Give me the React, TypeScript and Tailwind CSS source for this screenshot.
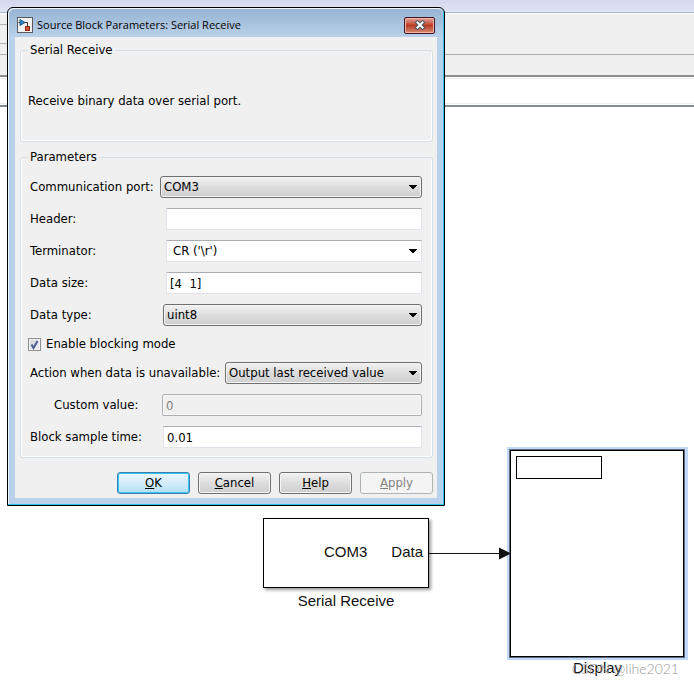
import React, { useState } from "react";

const uiFont = "font-['Tahoma','DejaVu_Sans_Condensed','DejaVu_Sans',sans-serif]";

const Arrow = () => (
  <svg className="pointer-events-none absolute right-[5px] top-[9px]" width="8" height="5" viewBox="0 0 8 5" shapeRendering="crispEdges">
    <path d="M0 0h8v1H0zM1 1h6v1H1zM2 2h4v1H2zM3 3h2v1H3z" fill="#000" />
  </svg>
);

type FieldProps = { id: string; label: string; labelClass: string; children: React.ReactNode };

const Field = ({ id, label, labelClass, children }: FieldProps) => (
  <div className="flex h-[22px] items-center">
    <label htmlFor={id} className={`shrink-0 whitespace-nowrap ${labelClass}`}>{label}</label>
    <div className="relative h-full min-w-0 flex-1">{children}</div>
  </div>
);

const comboClass =
  "block h-full w-full appearance-none rounded-[3px] border border-[#707070] bg-linear-to-b from-[#f2f2f2] from-0% via-[#dddddd] via-50% to-[#cfcfcf] pl-[3px] pr-5 shadow-[inset_0_0_0_1px_#f4f4f4] outline-none";
const inputClass =
  "block h-full w-full rounded-[1px] border border-[#e2e3ea] border-t-[#abadb3] bg-white pl-[3px] outline-none";

const Combo = ({ id, options }: { id: string; options: string[] }) => (
  <>
    <select id={id} className={comboClass}>
      {options.map((o) => <option key={o}>{o}</option>)}
    </select>
    <Arrow />
  </>
);

const BlockIcon = () => (
  <svg width="16" height="16" viewBox="0 0 16 16">
    <rect x="0.5" y="0.5" width="15" height="15" fill="#f1f1f1" stroke="#5b5b5b" />
    <path d="M8 5.5h2.5V9M1.5 5.5H3" fill="none" stroke="#333" />
    <path d="M3 2.5v6l5-3z" fill="#3387bd" stroke="#1c5d8a" />
    <rect x="8.5" y="9.5" width="4" height="4" fill="#d8532b" stroke="#8d2c10" />
  </svg>
);

const buttonClass =
  "h-[22px] w-[73px] rounded-[3px] border border-[#707070] bg-linear-to-b from-[#f2f2f2] from-0% via-[#dddddd] via-50% to-[#cfcfcf] text-center leading-5 shadow-[inset_0_0_0_1px_#f6f6f6]";

const ParametersDialog = () => {
  const [blocking, setBlocking] = useState(true);

  return (
    <div
      role="dialog"
      aria-labelledby="dialog-title"
      className={`absolute left-[7px] top-[7px] w-[438px] rounded-t-md border border-black bg-[#b9d1ea] text-[13px] leading-4 text-black shadow-[inset_-1px_-1px_0_#2bc8e4,inset_1px_1px_0_#eef5fb] ${uiFont}`}
    >
      <div className="m-px mb-0 flex h-7 items-center rounded-t-md bg-linear-to-b from-[#98b4d2] to-[#b9d1ea] pl-2 pr-2 pt-1">
        <BlockIcon />
        <h1 id="dialog-title" className="ml-1 flex-1 font-['Open_Sans','Noto_Sans',sans-serif] text-[11px]">
          Source Block Parameters: Serial Receive
        </h1>
        <button
          aria-label="Close"
          className="flex h-[17px] w-[31px] items-center justify-center rounded-[2px] border border-[#431422] bg-linear-to-b from-[#e5a499] from-0% via-[#b83b22] via-50% to-[#d58a76] shadow-[inset_0_0_0_1px_#efb5aa]"
        >
          <svg width="12" height="10" viewBox="0 0 12 10">
            <path d="M3.5 2.5l5 5M8.5 2.5l-5 5" stroke="#4b5364" strokeWidth="4" strokeLinecap="square" />
            <path d="M3.5 2.5l5 5M8.5 2.5l-5 5" stroke="#fff" strokeWidth="2" strokeLinecap="square" />
          </svg>
        </button>
      </div>

      <div className="mx-[7px] mb-[7px] bg-[#f0f0f0] pb-1 pl-[5px] pr-1 pt-[5px]">
        <fieldset className="rounded-[3px] border border-[#d5dfe5] pb-8 pl-[7px] pt-[35px] shadow-[inset_1px_0_0_#fff,inset_-1px_-1px_0_#fff]">
          <legend className="px-[2px]">Serial Receive</legend>
          <p>Receive binary data over serial port.</p>
        </fieldset>

        <fieldset className="mt-[7px] rounded-[3px] border border-[#d5dfe5] pb-[9px] pl-[9px] pr-[10px] pt-[11px] shadow-[inset_1px_0_0_#fff,inset_-1px_-1px_0_#fff]">
          <legend className="-ml-[2px] px-[2px]">Parameters</legend>
          <div className="flex flex-col gap-[10px]">
            <Field id="port" label="Communication port:" labelClass="w-[130px]">
              <Combo id="port" options={["COM3", "COM1", "COM2"]} />
            </Field>
            <Field id="header" label="Header:" labelClass="w-[136px]">
              <input id="header" className={inputClass} />
            </Field>
            <Field id="terminator" label="Terminator:" labelClass="w-[136px]">
              <select
                id="terminator"
                className="block h-full w-full appearance-none rounded-[1px] border border-[#e2e3ea] border-t-[#abadb3] bg-white pl-[6px] pr-5 outline-none"
              >
                <option>CR ('\r')</option>
                <option>LF ('\n')</option>
              </select>
              <Arrow />
            </Field>
            <Field id="size" label="Data size:" labelClass="w-[136px]">
              <input id="size" defaultValue="[4  1]" className={inputClass} />
            </Field>
            <Field id="type" label="Data type:" labelClass="w-[133px]">
              <Combo id="type" options={["uint8", "int8", "uint16", "int16"]} />
            </Field>
            <div className="-ml-[2px] flex h-4 items-center">
              <span className="relative flex size-[13px]">
                <input
                  id="blocking"
                  type="checkbox"
                  checked={blocking}
                  onChange={(e) => setBlocking(e.target.checked)}
                  className="size-[13px] appearance-none border border-[#8e8f8f] bg-linear-to-br from-[#cfd3d8] to-[#f4f4f4] shadow-[inset_0_0_0_1px_#f4f4f4]"
                />
                {blocking && (
                  <svg className="pointer-events-none absolute inset-0" width="13" height="13" viewBox="0 0 13 13">
                    <path d="M3.5 6.5l2 3.5L9.5 3" fill="none" stroke="#4b5f97" strokeWidth="2" />
                  </svg>
                )}
              </span>
              <label htmlFor="blocking" className="ml-[5px]">Enable blocking mode</label>
            </div>
            <Field id="action" label="Action when data is unavailable:" labelClass="w-[195px]">
              <Combo id="action" options={["Output last received value", "Output custom value", "Error"]} />
            </Field>
            <Field id="custom" label="Custom value:" labelClass="w-[132px] pl-6">
              <input
                id="custom"
                disabled
                defaultValue="0"
                className="block h-full w-full rounded-[2px] border border-[#afafaf] bg-[#f0f0f0] pl-[3px] text-[#838383] shadow-[inset_0_0_0_1px_#f8f8f8]"
              />
            </Field>
            <Field id="sample" label="Block sample time:" labelClass="w-[133px]">
              <input id="sample" defaultValue="0.01" className={inputClass} />
            </Field>
          </div>
        </fieldset>

        <div className="mt-[14px] flex justify-end gap-2">
          <button className="h-[22px] w-[73px] rounded-[3px] border border-[#3c7fb1] bg-linear-to-b from-[#eaf6fd] from-0% via-[#d4edfa] via-50% to-[#b4dff5] text-center leading-5 shadow-[inset_0_0_0_1px_#33c5f3]">
            <u>O</u>K
          </button>
          <button className={buttonClass}><u>C</u>ancel</button>
          <button className={buttonClass}><u>H</u>elp</button>
          <button disabled className="h-[22px] w-[73px] rounded-[3px] border border-[#adb2b5] bg-[#f4f4f4] text-center leading-5 text-[#838383]">
            <u>A</u>pply
          </button>
        </div>
      </div>
    </div>
  );
};

const Canvas = () => (
  <main className="relative flex-1 bg-white font-['Liberation_Sans',Arial,sans-serif] text-[15px] leading-4 text-[#111]">
    <div className="absolute left-[263px] top-[411px] flex h-[70px] w-[166px] items-center justify-end gap-6 border border-black bg-white pb-[2px] pr-[5px] shadow-[2px_2px_3px_#999]">
      <span>COM3</span>
      <span>Data</span>
    </div>
    <span className="absolute left-[263px] top-[486px] w-[166px] text-center">Serial Receive</span>

    <div className="absolute left-[507px] top-[340px] h-[213px] w-[181px] bg-[#c2d9fa] p-[3px]">
      <div className="mr-px h-[207px] border border-black bg-white p-[5px] shadow-[0_0_0_1px_#5f6b7c]">
        <div className="h-[23px] w-[86px] border border-black" />
      </div>
    </div>
    <span className="absolute left-[507px] top-[553px] w-[181px] text-center">Display</span>

    <svg className="absolute left-[429px] top-[439px]" width="83" height="14" viewBox="0 0 83 14">
      <path d="M0 7.5h72" stroke="#111" />
      <path d="M70 1.5v12l12-6z" fill="#111" />
    </svg>
  </main>
);

const App: React.FC = () => (
  <div className="relative flex min-h-screen flex-col overflow-hidden bg-white">
    {/* model window frame */}
    <header className="flex flex-col">
      <div className="h-[13px] border-b border-[#abb3d0] bg-linear-to-b from-[#d3d8ed] to-[#e0e4f4]" />
      <div className="h-[42px] border-b border-t border-b-[#aeaeae] border-t-white bg-[#f0f0f0]">
        <div className="mt-[10px] h-5 w-2 border-y border-[#b4b4b4]" />
      </div>
      <div className="h-[22px] border-b-2 border-[#8d8d8d] bg-[#f0f0f0]" />
      <div className="h-[30px] border-b-2 border-[#858993] bg-white pb-px pt-px">
        <div className="h-full border-y border-[#ededed]" />
      </div>
    </header>
    <Canvas />
    <ParametersDialog />
    <span className="absolute bottom-[7px] right-[15px] font-['Lato',sans-serif] text-[14px] font-light leading-4 text-[#999]">
      CSDN @lihe2021
    </span>
  </div>
);

export default App;
